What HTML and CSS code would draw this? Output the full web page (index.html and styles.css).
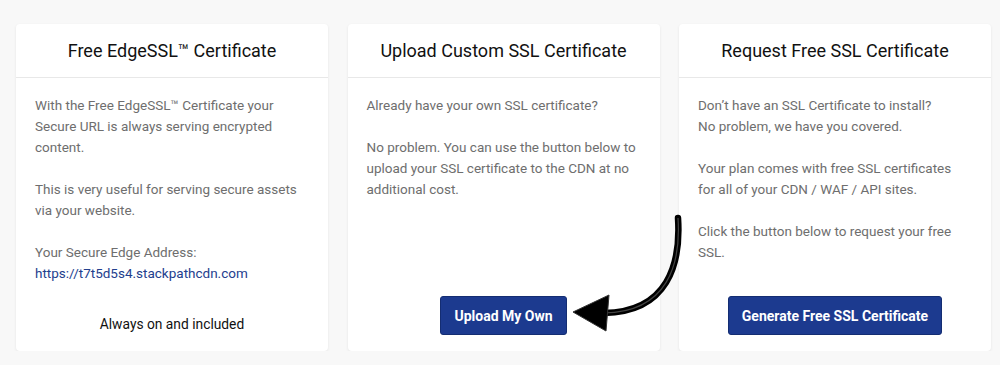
FILE: index.html
```html
<!DOCTYPE html>
<html>
  <head>
    <meta charset="UTF-8">
    <title>SSL Certificates</title>
    <link rel="stylesheet" href="styles.css">
  </head>
  <body>
    <div class="cards">
      <div class="card">
        <div class="card-header">Free EdgeSSL™ Certificate</div>
        <div class="card-body">
          <p>With the Free EdgeSSL™ Certificate your Secure URL is always serving encrypted content.</p>
          <p>This is very useful for serving secure assets via your website.</p>
          <p>Your Secure Edge Address:<br><a href="#" class="edge-link">https://t7t5d5s4.stackpathcdn.com</a></p>
        </div>
        <div class="card-footer">
          <span class="included">Always on and included</span>
        </div>
      </div>

      <div class="card">
        <div class="card-header">Upload Custom SSL Certificate</div>
        <div class="card-body">
          <p>Already have your own SSL certificate?</p>
          <p>No problem. You can use the button below to upload your SSL certificate to the CDN at no additional cost.</p>
        </div>
        <div class="card-footer">
          <button type="button" class="card-button">Upload My Own</button>
        </div>
      </div>

      <div class="card">
        <div class="card-header">Request Free SSL Certificate</div>
        <div class="card-body">
          <p>Don’t have an SSL Certificate to install?<br>No problem, we have you covered.</p>
          <p>Your plan comes with free SSL certificates for all of your CDN / WAF / API sites.</p>
          <p>Click the button below to request your free SSL.</p>
        </div>
        <div class="card-footer">
          <button type="button" class="card-button">Generate Free SSL Certificate</button>
        </div>
      </div>
    </div>

    <!-- hand drawn arrow pointing at the upload button -->
    <svg class="arrow" width="1000" height="365" viewBox="0 0 1000 365">
      <path d="M678 218 C 681 264, 668 312, 604 313" fill="none" stroke="#000" stroke-width="6.5" stroke-linecap="round"/>
      <path d="M678 218 C 681 264, 668 312, 604 313" fill="none" stroke="#444" stroke-width="1.2"/>
      <polygon points="573,312 609,295 606,331" fill="#000" stroke="#333" stroke-width="1" stroke-linejoin="round"/>
    </svg>
  </body>
</html>
```

FILE: styles.css
```css
body {
    margin: 0;
    font-family: Roboto, "Liberation Sans", Arial, sans-serif;
    background-color: #f8f8f8;
    color: #111;
}

.cards {
    display: grid;
    grid-template-columns: 312px 312px 312px;
    column-gap: 19.5px;
    padding: 24px 9px 0 16px;
}

.card {
    display: flex;
    flex-direction: column;
    background-color: #fff;
    border-radius: 4px;
    box-shadow: 0 1px 3px rgba(0, 0, 0, 0.08);
    height: 327px;
}

.card-header {
    height: 53px;
    line-height: 53px;
    text-align: center;
    font-size: 18px;
    color: #111;
    border-bottom: 1px solid #e8e8e8;
}

.card-body {
    flex: 1;
    padding: 17px 22px 0 19px;
    font-size: 13.5px;
    line-height: 21px;
    color: #6e6e6e;
}

.card-body p {
    margin: 0 0 21px 0;
}

.edge-link {
    color: #23408e;
    text-decoration: none;
}

.card-footer {
    text-align: center;
    padding: 0 19px 16px 19px;
}

.included {
    display: inline-block;
    font-size: 13.8px;
    line-height: 21px;
    color: #111;
}

.card-button {
    height: 39px;
    padding: 0 13px;
    font-family: Roboto, "Liberation Sans", Arial, sans-serif;
    font-size: 14px;
    font-weight: bold;
    color: #fff;
    background-color: #1c3a8f;
    border: 1px solid #142d72;
    border-radius: 3px;
    cursor: pointer;
}

.arrow {
    position: absolute;
    left: 0;
    top: 0;
    pointer-events: none;
}
```
